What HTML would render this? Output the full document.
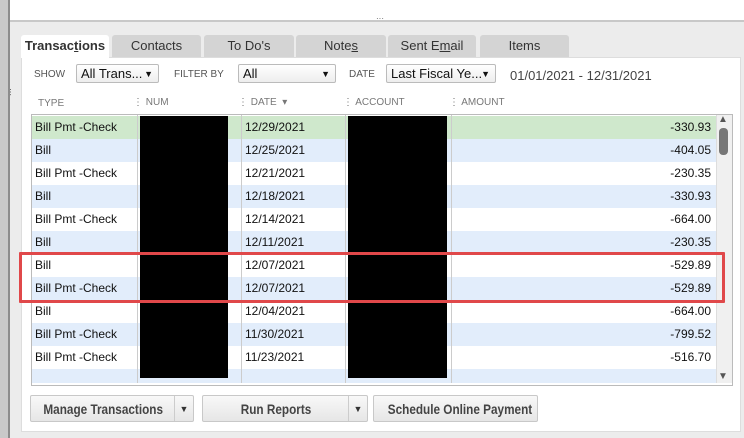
<!DOCTYPE html><html><head><style>
body{margin:0;width:744px;height:438px;overflow:hidden;background:#ececec;font-family:"Liberation Sans",sans-serif;position:relative}
.a{position:absolute}
.tab{position:absolute;top:35px;height:22px;background:#d4d4d4;border-radius:3px 3px 0 0;font-size:13px;color:#333;text-align:center;line-height:22px}
.sel{border:1px solid #bbb;background:linear-gradient(#fff,#eee);height:19px;line-height:18px;padding-left:4px;color:#111;font-size:13px;box-sizing:border-box;border-radius:2px}
.lbl{font-size:10px;color:#555}
.row{position:absolute;left:32px;width:684px;height:23px;font-size:12px;color:#111;line-height:23px}
.btn{position:absolute;top:395px;height:27px;border:1px solid #c8c8c8;background:linear-gradient(#f8f8f8,#e6e6e6);font-size:14px;font-weight:bold;color:#444;text-align:center;line-height:26px;box-sizing:border-box;border-radius:2px;white-space:nowrap}
.btn span{display:inline-block;transform:scaleX(0.84)}
.dd{position:absolute;top:0;bottom:0;width:18px;border-left:1px solid #ccc;font-size:9px;line-height:26px;color:#333;text-align:center}
</style></head><body>
<div class="a" style="left:0;top:0;width:744px;height:20px;background:#fff"></div>
<div class="a" style="left:0;top:20px;width:744px;height:2px;background:#c8c8c8"></div>
<div class="a" style="left:0;top:0;width:8px;height:438px;background:#c9c9c9"></div>
<div class="a" style="left:8px;top:0;width:2px;height:438px;background:#8c8c8c"></div>
<div class="a" style="left:376px;top:14px;font-size:8px;color:#555">···</div>
<div class="a" style="left:6px;top:88px;font-size:8px;color:#333;writing-mode:vertical-lr">···</div>
<div class="a" style="left:21px;top:57px;width:718px;height:373px;background:#fff;border:1px solid #ddd"></div>
<div class="tab" style="left:21px;width:88px;background:#fff;font-weight:bold;color:#333;height:23px">Transac<u>t</u>ions</div>
<div class="tab" style="left:112px;width:89px">Contacts</div>
<div class="tab" style="left:204px;width:90px">To Do's</div>
<div class="tab" style="left:296px;width:90px">Note<u>s</u></div>
<div class="tab" style="left:388px;width:88px">Sent E<u>m</u>ail</div>
<div class="tab" style="left:480px;width:89px">Items</div>
<div class="a lbl" style="left:34px;top:69px">SHOW</div>
<div class="a sel" style="left:76px;top:64px;width:83px">All Trans... <span style="font-size:9px;position:absolute;right:5px">▼</span></div>
<div class="a lbl" style="left:174px;top:69px">FILTER BY</div>
<div class="a sel" style="left:238px;top:64px;width:98px">All<span style="font-size:9px;position:absolute;right:5px">▼</span></div>
<div class="a lbl" style="left:349px;top:69px">DATE</div>
<div class="a sel" style="left:386px;top:64px;width:110px">Last Fiscal Ye...<span style="font-size:9px;position:absolute;right:5px">▼</span></div>
<div class="a" style="left:510px;top:68px;font-size:13px;color:#444">01/01/2021 - 12/31/2021</div>
<div class="a lbl" style="left:38px;top:98px;color:#777">TYPE</div>
<div class="a lbl" style="left:133px;top:97px;color:#777">⋮ NUM</div>
<div class="a lbl" style="left:238px;top:97px;color:#777">⋮ DATE &nbsp;▾</div>
<div class="a lbl" style="left:343px;top:97px;color:#777">⋮ ACCOUNT</div>
<div class="a lbl" style="left:449px;top:97px;color:#777">⋮ AMOUNT</div>
<div class="a" style="left:31px;top:114px;width:700px;height:270px;border:1px solid #bbb;background:#fff"></div>
<div class="row" style="top:116px;background:#cfe8cc"><span class="a" style="left:3px">Bill Pmt -Check</span><span class="a" style="left:213px">12/29/2021</span><span class="a" style="right:5px">-330.93</span></div>
<div class="row" style="top:139px;background:#e2edfb"><span class="a" style="left:3px">Bill</span><span class="a" style="left:213px">12/25/2021</span><span class="a" style="right:5px">-404.05</span></div>
<div class="row" style="top:162px"><span class="a" style="left:3px">Bill Pmt -Check</span><span class="a" style="left:213px">12/21/2021</span><span class="a" style="right:5px">-230.35</span></div>
<div class="row" style="top:185px;background:#e2edfb"><span class="a" style="left:3px">Bill</span><span class="a" style="left:213px">12/18/2021</span><span class="a" style="right:5px">-330.93</span></div>
<div class="row" style="top:208px"><span class="a" style="left:3px">Bill Pmt -Check</span><span class="a" style="left:213px">12/14/2021</span><span class="a" style="right:5px">-664.00</span></div>
<div class="row" style="top:231px;background:#e2edfb"><span class="a" style="left:3px">Bill</span><span class="a" style="left:213px">12/11/2021</span><span class="a" style="right:5px">-230.35</span></div>
<div class="row" style="top:254px"><span class="a" style="left:3px">Bill</span><span class="a" style="left:213px">12/07/2021</span><span class="a" style="right:5px">-529.89</span></div>
<div class="row" style="top:277px;background:#e2edfb"><span class="a" style="left:3px">Bill Pmt -Check</span><span class="a" style="left:213px">12/07/2021</span><span class="a" style="right:5px">-529.89</span></div>
<div class="row" style="top:300px"><span class="a" style="left:3px">Bill</span><span class="a" style="left:213px">12/04/2021</span><span class="a" style="right:5px">-664.00</span></div>
<div class="row" style="top:323px;background:#e2edfb"><span class="a" style="left:3px">Bill Pmt -Check</span><span class="a" style="left:213px">11/30/2021</span><span class="a" style="right:5px">-799.52</span></div>
<div class="row" style="top:346px"><span class="a" style="left:3px">Bill Pmt -Check</span><span class="a" style="left:213px">11/23/2021</span><span class="a" style="right:5px">-516.70</span></div>
<div class="row" style="top:369px;height:14px;background:#e2edfb"></div>
<div class="a" style="left:137px;top:115px;width:1px;height:268px;background:#ccc"></div>
<div class="a" style="left:241px;top:115px;width:1px;height:268px;background:#ccc"></div>
<div class="a" style="left:345px;top:115px;width:1px;height:268px;background:#ccc"></div>
<div class="a" style="left:451px;top:115px;width:1px;height:268px;background:#ccc"></div>
<div class="a" style="left:140px;top:116px;width:88px;height:262px;background:#000"></div>
<div class="a" style="left:348px;top:116px;width:99px;height:262px;background:#000"></div>
<div class="a" style="left:716px;top:115px;width:15px;height:268px;background:#f0f0f0;border-left:1px solid #ddd"></div>
<div class="a" style="left:718px;top:114px;font-size:10px;color:#555">▲</div>
<div class="a" style="left:719px;top:128px;width:9px;height:27px;background:#777;border-radius:4px"></div>
<div class="a" style="left:718px;top:371px;font-size:10px;color:#555">▼</div>
<div class="a" style="left:19px;top:252px;width:700px;height:45px;border:3px solid #e0484a;border-radius:1px"></div>
<div class="btn" style="left:30px;width:164px;padding-right:18px"><span>Manage Transactions</span><div class="dd" style="right:0">▼</div></div>
<div class="btn" style="left:202px;width:166px;padding-right:18px"><span>Run Reports</span><div class="dd" style="right:0">▼</div></div>
<div class="btn" style="left:373px;width:165px"><span>Schedule Online Payment</span></div>
</body></html>
